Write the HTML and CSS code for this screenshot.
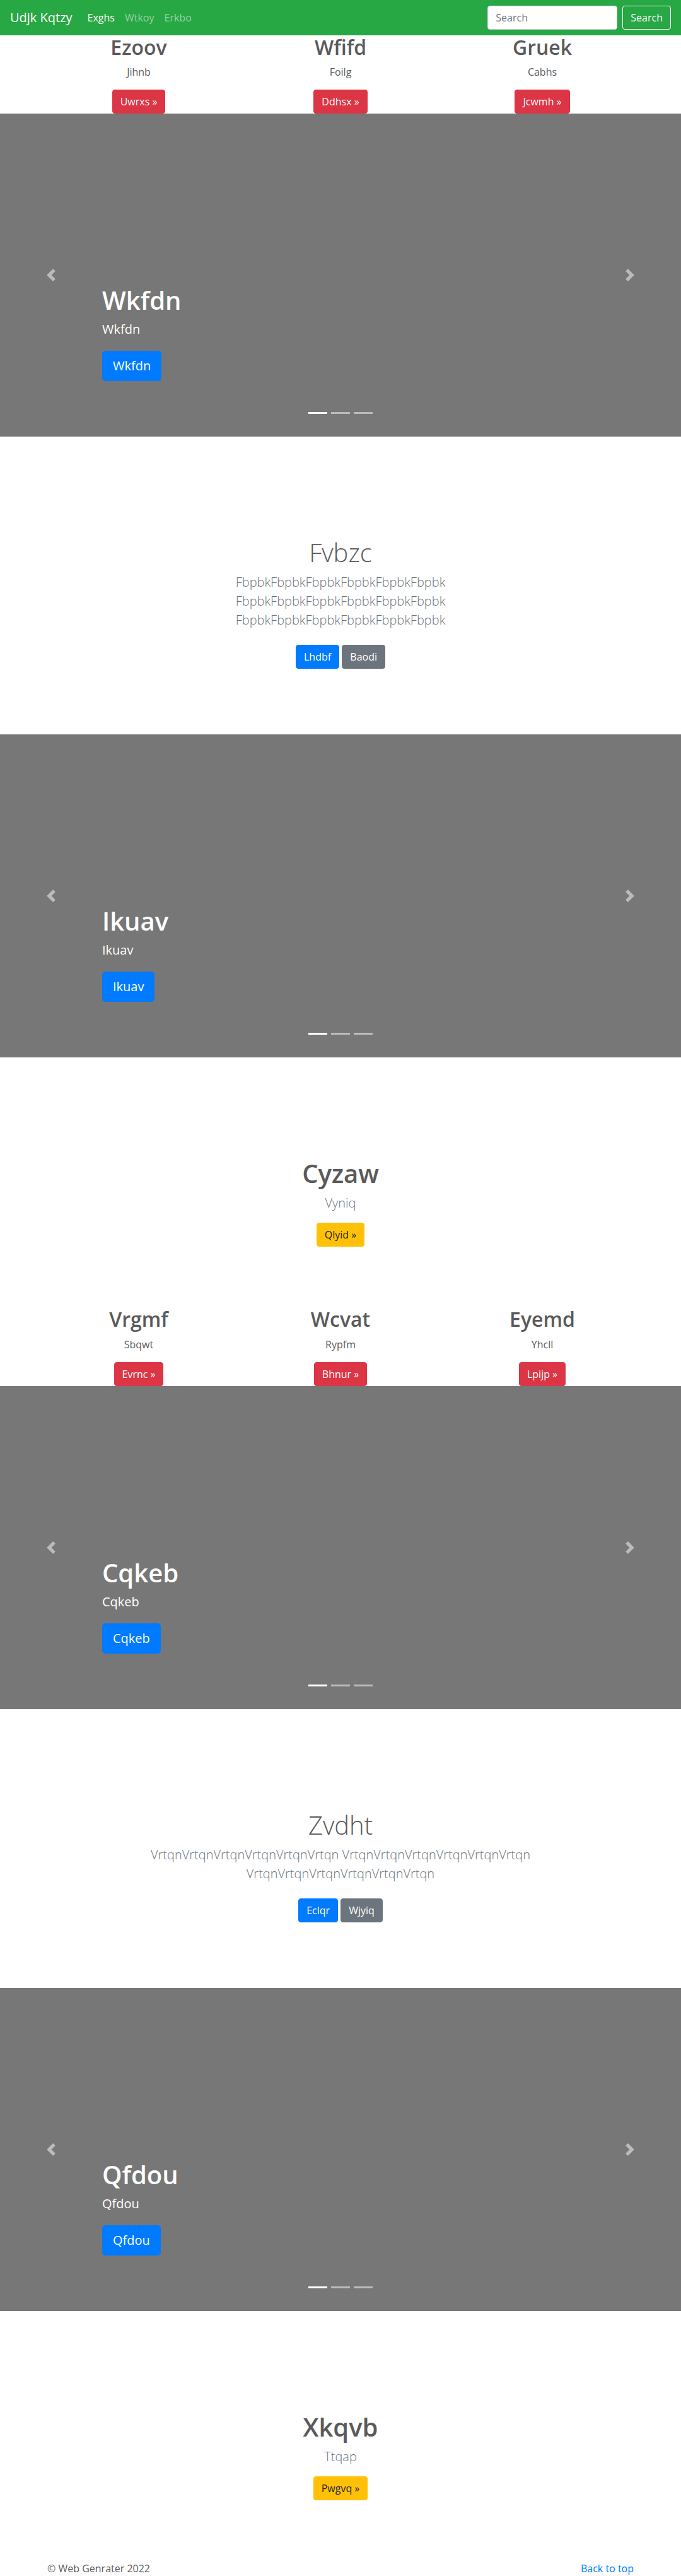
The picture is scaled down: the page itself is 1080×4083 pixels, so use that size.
FILE: index.html
```html
<!DOCTYPE html>
<html lang="en">
<head>
<meta charset="utf-8">
<title>Udjk Kqtzy</title>
<link rel="stylesheet" href="styles.css">
</head>
<body>
<header>
  <nav class="navbar">
    <a class="brand" href="#">Udjk Kqtzy</a>
    <ul class="nav-list">
      <li><a class="nav-link active" href="#">Exghs</a></li>
      <li><a class="nav-link" href="#">Wtkoy</a></li>
      <li><a class="nav-link" href="#">Erkbo</a></li>
    </ul>
    <form class="search-form">
      <input class="search-input" type="text" placeholder="Search">
      <button class="btn btn-outline-light" type="button">Search</button>
    </form>
  </nav>
</header>

<main>
  <div class="container marketing">
    <div class="col"><h2>Ezoov</h2><p>Jihnb</p><div class="col-action"><a class="btn btn-danger" href="#">Uwrxs &raquo;</a></div></div>
    <div class="col"><h2>Wfifd</h2><p>Foilg</p><div class="col-action"><a class="btn btn-danger" href="#">Ddhsx &raquo;</a></div></div>
    <div class="col"><h2>Gruek</h2><p>Cabhs</p><div class="col-action"><a class="btn btn-danger" href="#">Jcwmh &raquo;</a></div></div>
  </div>

  <div class="carousel">
    <ol class="indicators"><li class="active"></li><li></li><li></li></ol>
    <div class="caption">
      <h1>Wkfdn</h1>
      <p>Wkfdn</p>
      <p><a class="btn btn-lg btn-primary" href="#">Wkfdn</a></p>
    </div>
    <a class="control control-prev" href="#"><svg width="20" height="20" viewBox="0 0 8 8"><path fill="#fff" d="M5.25 0l-4 4 4 4 1.5-1.5L4.25 4l2.5-2.5L5.25 0z"/></svg></a>
    <a class="control control-next" href="#"><svg width="20" height="20" viewBox="0 0 8 8"><path fill="#fff" d="M2.75 0l-1.5 1.5L3.75 4l-2.5 2.5L2.75 8l4-4-4-4z"/></svg></a>
  </div>

  <section class="jumbo">
    <div class="container">
      <h1 class="jumbo-heading">Fvbzc</h1>
      <p class="lead muted">FbpbkFbpbkFbpbkFbpbkFbpbkFbpbk FbpbkFbpbkFbpbkFbpbkFbpbkFbpbk FbpbkFbpbkFbpbkFbpbkFbpbkFbpbk</p>
      <p class="jumbo-actions"><a class="btn btn-primary my" href="#">Lhdbf</a> <a class="btn btn-secondary my" href="#">Baodi</a></p>
    </div>
  </section>

  <div class="carousel">
    <ol class="indicators"><li class="active"></li><li></li><li></li></ol>
    <div class="caption">
      <h1>Ikuav</h1>
      <p>Ikuav</p>
      <p><a class="btn btn-lg btn-primary" href="#">Ikuav</a></p>
    </div>
    <a class="control control-prev" href="#"><svg width="20" height="20" viewBox="0 0 8 8"><path fill="#fff" d="M5.25 0l-4 4 4 4 1.5-1.5L4.25 4l2.5-2.5L5.25 0z"/></svg></a>
    <a class="control control-next" href="#"><svg width="20" height="20" viewBox="0 0 8 8"><path fill="#fff" d="M2.75 0l-1.5 1.5L3.75 4l-2.5 2.5L2.75 8l4-4-4-4z"/></svg></a>
  </div>

  <section class="jumbo">
    <div class="container">
      <h1>Cyzaw</h1>
      <p class="lead muted">Vyniq</p>
      <p class="jumbo-actions"><a class="btn btn-warning" href="#">Qlyid &raquo;</a></p>
    </div>
  </section>

  <div class="container marketing">
    <div class="col"><h2>Vrgmf</h2><p>Sbqwt</p><div class="col-action"><a class="btn btn-danger" href="#">Evrnc &raquo;</a></div></div>
    <div class="col"><h2>Wcvat</h2><p>Rypfm</p><div class="col-action"><a class="btn btn-danger" href="#">Bhnur &raquo;</a></div></div>
    <div class="col"><h2>Eyemd</h2><p>Yhcll</p><div class="col-action"><a class="btn btn-danger" href="#">Lpijp &raquo;</a></div></div>
  </div>

  <div class="carousel">
    <ol class="indicators"><li class="active"></li><li></li><li></li></ol>
    <div class="caption">
      <h1>Cqkeb</h1>
      <p>Cqkeb</p>
      <p><a class="btn btn-lg btn-primary" href="#">Cqkeb</a></p>
    </div>
    <a class="control control-prev" href="#"><svg width="20" height="20" viewBox="0 0 8 8"><path fill="#fff" d="M5.25 0l-4 4 4 4 1.5-1.5L4.25 4l2.5-2.5L5.25 0z"/></svg></a>
    <a class="control control-next" href="#"><svg width="20" height="20" viewBox="0 0 8 8"><path fill="#fff" d="M2.75 0l-1.5 1.5L3.75 4l-2.5 2.5L2.75 8l4-4-4-4z"/></svg></a>
  </div>

  <section class="jumbo">
    <div class="container">
      <h1 class="jumbo-heading">Zvdht</h1>
      <p class="lead muted">VrtqnVrtqnVrtqnVrtqnVrtqnVrtqn VrtqnVrtqnVrtqnVrtqnVrtqnVrtqn VrtqnVrtqnVrtqnVrtqnVrtqnVrtqn</p>
      <p class="jumbo-actions"><a class="btn btn-primary my" href="#">Eclqr</a> <a class="btn btn-secondary my" href="#">Wjyiq</a></p>
    </div>
  </section>

  <div class="carousel">
    <ol class="indicators"><li class="active"></li><li></li><li></li></ol>
    <div class="caption">
      <h1>Qfdou</h1>
      <p>Qfdou</p>
      <p><a class="btn btn-lg btn-primary" href="#">Qfdou</a></p>
    </div>
    <a class="control control-prev" href="#"><svg width="20" height="20" viewBox="0 0 8 8"><path fill="#fff" d="M5.25 0l-4 4 4 4 1.5-1.5L4.25 4l2.5-2.5L5.25 0z"/></svg></a>
    <a class="control control-next" href="#"><svg width="20" height="20" viewBox="0 0 8 8"><path fill="#fff" d="M2.75 0l-1.5 1.5L3.75 4l-2.5 2.5L2.75 8l4-4-4-4z"/></svg></a>
  </div>

  <section class="jumbo">
    <div class="container">
      <h1>Xkqvb</h1>
      <p class="lead muted">Ttqap</p>
      <p class="jumbo-actions"><a class="btn btn-warning" href="#">Pwgvq &raquo;</a></p>
    </div>
  </section>
</main>

<footer class="container footer">
  <p>&copy; Web Genrater 2022</p>
  <p><a class="top-link" href="#">Back to top</a></p>
</footer>
</body>
</html>
```

FILE: styles.css
```css
* { box-sizing: border-box; }

html, body {
  margin: 0;
  padding: 0;
}

body {
  font-family: "Segoe UI", "Open Sans", "Noto Sans", sans-serif;
  font-size: 16px;
  line-height: 1.5;
  color: #5a5a5a;
  background: #fff;
}

h1, h2 {
  margin: 0 0 8px;
  font-weight: 600;
  line-height: 1.2;
}

h1 { font-size: 40px; }
h2 { font-size: 32px; }

p { margin: 0 0 16px; }

a { text-decoration: none; }

/* ---------- navbar ---------- */
.navbar {
  display: flex;
  align-items: center;
  padding: 8px 16px;
  background: #28a745;
}

.brand {
  font-size: 20px;
  line-height: 30px;
  padding: 5px 0;
  margin-right: 16px;
  color: #fff;
  white-space: nowrap;
}

.nav-list {
  display: flex;
  flex: 1;
  list-style: none;
  margin: 0;
  padding: 0;
}

.nav-link {
  display: block;
  padding: 8px;
  color: rgba(255, 255, 255, 0.5);
}

.nav-link.active { color: #fff; }

.search-form {
  display: flex;
  align-items: center;
}

.search-input {
  width: 206px;
  height: 38px;
  padding: 6px 12px;
  margin-right: 8px;
  font-family: inherit;
  font-size: 16px;
  line-height: 1.5;
  color: #495057;
  background: #fff;
  border: 1px solid #ced4da;
  border-radius: 4px;
}

.search-input::placeholder { color: #6c757d; opacity: 1; }

/* ---------- buttons ---------- */
.btn {
  display: inline-block;
  font-family: inherit;
  font-weight: 400;
  font-size: 16px;
  line-height: 1.5;
  padding: 6px 12px;
  border: 1px solid transparent;
  border-radius: 4px;
  text-align: center;
  vertical-align: middle;
  white-space: nowrap;
  cursor: pointer;
}

.btn-lg {
  padding: 8px 16px;
  font-size: 20px;
  line-height: 1.5;
  border-radius: 4.8px;
}

.btn-outline-light {
  color: #f8f9fa;
  background: transparent;
  border-color: #f8f9fa;
}

.btn-danger { color: #fff; background: #dc3545; border-color: #dc3545; }
.btn-primary { color: #fff; background: #007bff; border-color: #007bff; }
.btn-secondary { color: #fff; background: #6c757d; border-color: #6c757d; }
.btn-warning { color: #212529; background: #ffc107; border-color: #ffc107; }

.my { margin: 8px 0; }

/* ---------- layout ---------- */
.container {
  width: 960px;
  margin: 0 auto;
  padding: 0 15px;
}

.marketing {
  display: grid;
  grid-template-columns: repeat(3, 1fr);
  column-gap: 30px;
  text-align: center;
}

.col-action { line-height: 0; }

/* ---------- carousel ---------- */
.carousel {
  position: relative;
  height: 512px;
  margin-bottom: 64px;
  background: #777;
  overflow: hidden;
}

.caption {
  position: absolute;
  left: 15%;
  right: 15%;
  bottom: 48px;
  padding: 20px 0;
  color: #fff;
  text-align: left;
  z-index: 10;
}

.caption p {
  font-size: 20px;
  line-height: 1.4;
  margin-bottom: 20px;
}

.control {
  position: absolute;
  top: 0;
  bottom: 0;
  width: 15%;
  display: flex;
  align-items: center;
  justify-content: center;
  opacity: 0.5;
}

.control-prev { left: 0; }
.control-next { right: 0; }

.indicators {
  position: absolute;
  left: 15%;
  right: 15%;
  bottom: 10px;
  display: flex;
  justify-content: center;
  list-style: none;
  margin: 0 0 16px;
  padding: 0;
  z-index: 15;
}

.indicators li {
  width: 30px;
  height: 3px;
  margin: 0 3px;
  box-sizing: content-box;
  background: #fff;
  background-clip: padding-box;
  border-top: 10px solid transparent;
  border-bottom: 10px solid transparent;
  opacity: 0.5;
}

.indicators li.active { opacity: 1; }

/* ---------- jumbotron sections ---------- */
.jumbo {
  padding: 96px 0;
  text-align: center;
  background: #fff;
}

.jumbo .jumbo-heading { font-weight: 300; }

.lead {
  font-size: 20px;
  font-weight: 300;
  line-height: 1.5;
  max-width: 610px;
  margin-left: auto;
  margin-right: auto;
}

.muted { color: #6c757d; }

.jumbo-actions { margin-bottom: 0; }

/* ---------- footer ---------- */
.footer {
  display: flex;
  justify-content: space-between;
}

.footer p { margin: 0; }

.top-link { color: #007bff; }
```
